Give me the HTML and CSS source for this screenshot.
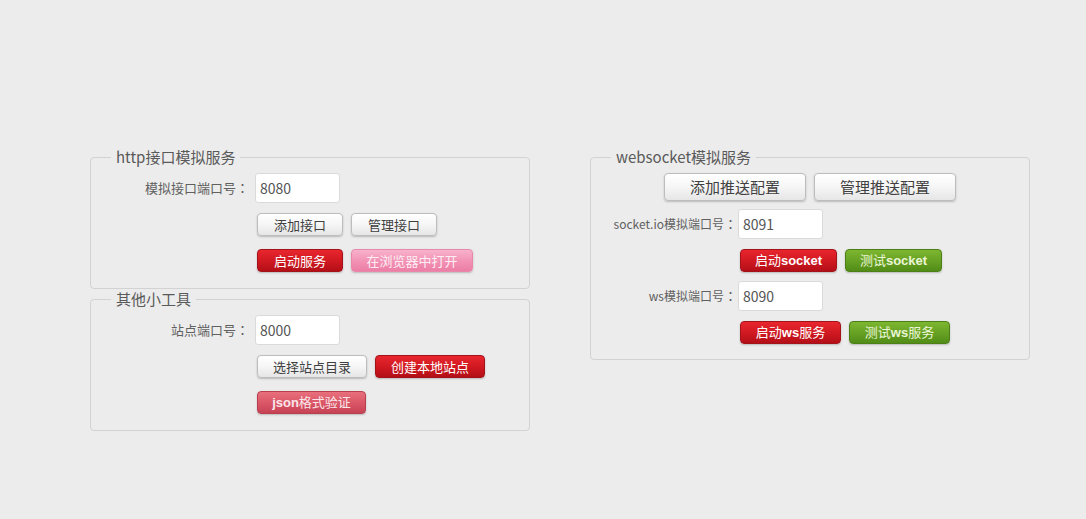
FILE: index.html
```html
<!DOCTYPE html>
<html lang="zh-CN">
<head>
<meta charset="utf-8">
<title>模拟服务</title>
<link rel="stylesheet" href="styles.css">
</head>
<body>
<div class="page">
  <div class="col">
    <fieldset class="box box-http">
      <legend>http接口模拟服务</legend>
      <div class="row">
        <label class="label">模拟接口端口号<span class="colon">：</span></label>
        <input class="field" type="text" value="8080">
      </div>
      <div class="btns btns-first">
        <button class="btn btn-white w86">添加接口</button>
        <button class="btn btn-white w86">管理接口</button>
      </div>
      <div class="btns">
        <button class="btn btn-red w86">启动服务</button>
        <button class="btn btn-pink w122">在浏览器中打开</button>
      </div>
    </fieldset>
    <fieldset class="box box-tools">
      <legend>其他小工具</legend>
      <div class="row">
        <label class="label">站点端口号<span class="colon">：</span></label>
        <input class="field" type="text" value="8000">
      </div>
      <div class="btns btns-first">
        <button class="btn btn-white w110">选择站点目录</button>
        <button class="btn btn-red w110">创建本地站点</button>
      </div>
      <div class="btns">
        <button class="btn btn-salmon w109"><b>json</b>格式验证</button>
      </div>
    </fieldset>
  </div>
  <div class="col">
    <fieldset class="box box-ws">
      <legend>websocket模拟服务</legend>
      <div class="top-btns">
        <button class="btn btn-white btn-big">添加推送配置</button>
        <button class="btn btn-white btn-big">管理推送配置</button>
      </div>
      <div class="row row-gap8">
        <label class="label">socket.io模拟端口号<span class="colon">：</span></label>
        <input class="field" type="text" value="8091">
      </div>
      <div class="btns btns-first">
        <button class="btn btn-red w97">启动<b>socket</b></button>
        <button class="btn btn-green w97">测试<b>socket</b></button>
      </div>
      <div class="row row-gap9">
        <label class="label">ws模拟端口号<span class="colon">：</span></label>
        <input class="field" type="text" value="8090">
      </div>
      <div class="btns btns-first">
        <button class="btn btn-red w101">启动<b>ws</b>服务</button>
        <button class="btn btn-green w101">测试<b>ws</b>服务</button>
      </div>
    </fieldset>
  </div>
</div>
</body>
</html>
```

FILE: styles.css
```css
html, body {
  margin: 0;
  background: #ececec;
  font-family: "Noto Sans CJK SC", "Liberation Sans", sans-serif;
  color: #555;
}

.page {
  display: flex;
  gap: 60px;
  padding: 147px 0 0 90px;
}

.col {
  width: 440px;
  display: flex;
  flex-direction: column;
}

.box {
  margin: 0;
  min-width: 0;
  border: 1px solid #d2d2d2;
  border-radius: 4px;
  padding: 6px 0 16px;
}

.box-ws {
  padding-bottom: 15px;
}

.box legend {
  margin-left: 20px;
  padding: 0 5px;
  font-size: 15px;
  line-height: 20px;
  color: #5a5a5a;
}

.row {
  display: flex;
  align-items: center;
  height: 30px;
}

.label {
  box-sizing: border-box;
  font-size: 13px;
  line-height: 16px;
  text-align: right;
  color: #606060;
  white-space: nowrap;
}

.colon {
  display: inline-block;
  width: 13px;
  font-size: 13px;
  text-align: center;
  font-family: "Noto Sans CJK TC", sans-serif;
}

.box-http .label,
.box-tools .label {
  width: 164px;
  padding-right: 6px;
}

.box-ws .label {
  width: 147px;
  padding-right: 1px;
  font-size: 12px;
}

.row-gap8 { margin-top: 8px; }
.row-gap9 { margin-top: 9px; }

.field {
  box-sizing: border-box;
  width: 85px;
  height: 30px;
  margin: 0;
  padding: 0 4px;
  border: 1px solid #dadada;
  border-radius: 3px;
  background: #fff;
  font-family: "Noto Sans CJK SC", "Liberation Sans", sans-serif;
  font-size: 14px;
  color: #555;
  outline: none;
}

.btns {
  display: flex;
  gap: 8px;
  margin-top: 13px;
  padding-left: 166px;
}

.btns-first {
  margin-top: 10px;
}

.box-ws .btns {
  padding-left: 149px;
}

.top-btns {
  display: flex;
  justify-content: center;
  gap: 8px;
}

.btn {
  box-sizing: border-box;
  height: 23px;
  margin: 0;
  padding: 0;
  border: 1px solid #bdbdbd;
  border-radius: 4px;
  font-family: "Noto Sans CJK SC", "Liberation Sans", sans-serif;
  font-size: 13px;
  line-height: 20px;
  white-space: nowrap;
  box-shadow: 0 1px 2px rgba(0, 0, 0, 0.22);
}

.btn b {
  font-family: "Liberation Sans", sans-serif;
  font-weight: bold;
  font-size: 13px;
}

.btn-big {
  width: 142px;
  height: 28px;
  font-size: 15px;
  line-height: 26px;
}

.w86 { width: 86px; }
.w97 { width: 97px; }
.w101 { width: 101px; }
.w109 { width: 109px; }
.w110 { width: 110px; }
.w122 { width: 122px; }

.btn-white {
  background: linear-gradient(#ffffff, #f7f7f7 45%, #e6e6e6);
  color: #404040;
}

.btn-red {
  border-color: #a4121a;
  background: linear-gradient(#e8262e, #cf1820 55%, #b30f18);
  color: #fff;
}

.btn-pink {
  border-color: #e889ab;
  background: linear-gradient(#f8b2cc, #f291b4 55%, #ec7ea6);
  color: #fdeef3;
}

.btn-salmon {
  border-color: #b8404e;
  background: linear-gradient(#e8707c, #d95566 55%, #c64356);
  color: #fbe6ea;
}

.btn-green {
  border-color: #4c7f16;
  background: linear-gradient(#7db630, #66a023 55%, #518c17);
  color: #eaf6d6;
}
```
